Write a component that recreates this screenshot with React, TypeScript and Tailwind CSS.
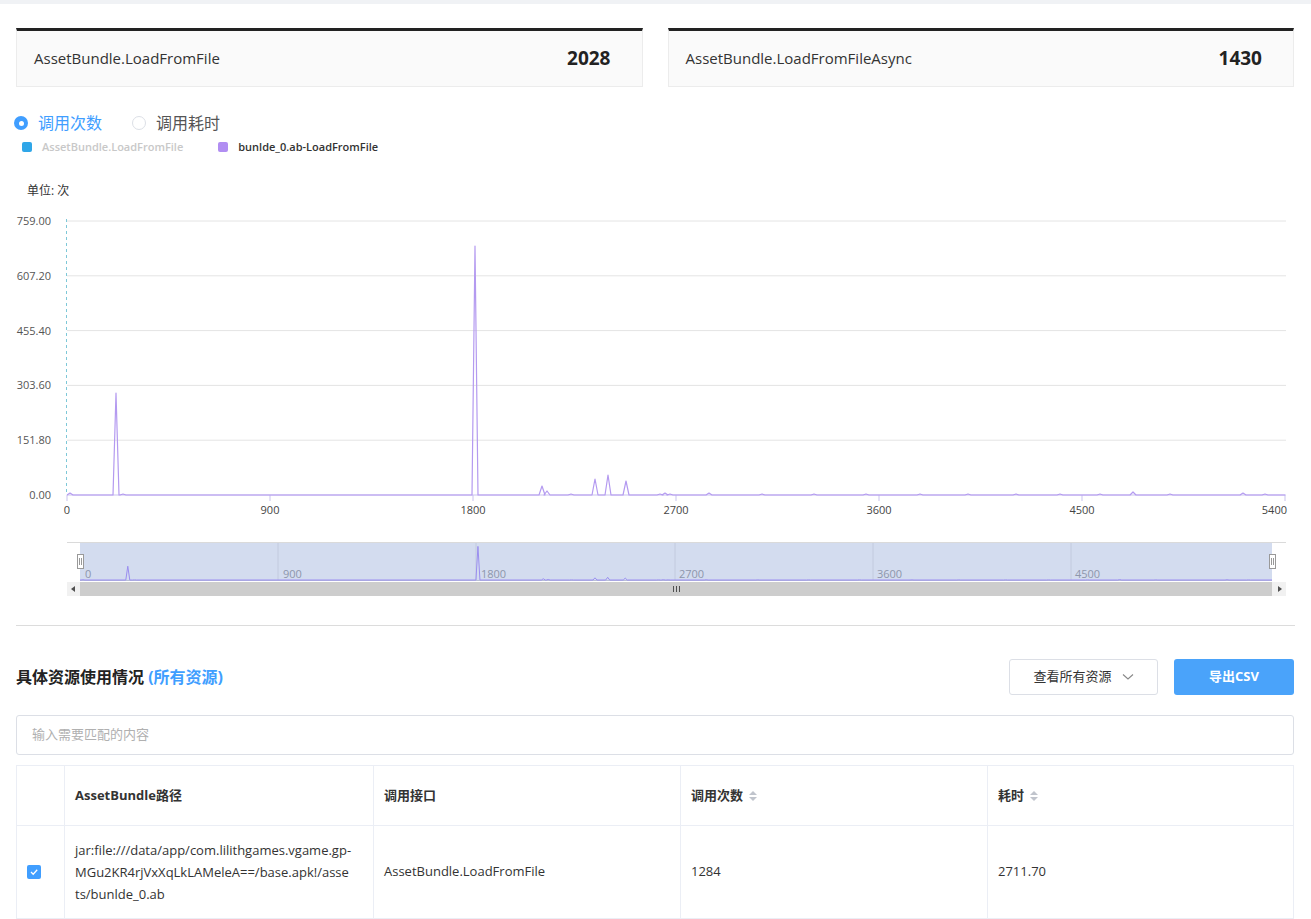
import React from 'react';

const font = { fontFamily: '"Open Sans", "Noto Sans CJK SC", sans-serif' };

// chart geometry in page pixels
const X0 = 67;
const X1 = 1285;
const Y0 = 494;
const yTicks = ['759.00', '607.20', '455.40', '303.60', '151.80', '0.00'];
const xTicks = ['0', '900', '1800', '2700', '3600', '4500', '5400'];

const spikes: [number, number][] = [
  [116, 392], [475, 245], [542, 485], [547, 490], [595, 478], [608, 474], [626, 480],
  [70, 492], [123, 493], [571, 493], [660, 493], [665, 492], [670, 493], [709, 492],
  [762, 493], [814, 493], [866, 493], [920, 493], [968, 493], [1016, 493], [1060, 493],
  [1100, 493], [1133, 491], [1170, 493], [1243, 492], [1265, 493],
];

function buildPath(pts: [number, number][], base: number, w: number) {
  const sorted = [...pts].sort((a, b) => a[0] - b[0]);
  let d = `M${X0},${base}`;
  for (const [x, y] of sorted) {
    d += ` L${x - w},${base} L${x},${y} L${x + w},${base}`;
  }
  d += ` L${X1},${base}`;
  return d;
}

const StatCard = ({ label, value }: { label: string; value: string }) => (
  <div className="flex-1 h-[59px] bg-[#fafafa] border border-[#ececec] border-t-[3px] border-t-[#222] flex items-center justify-between pl-[17px] pr-[31px]">
    <span className="text-[15px] text-[#333]">{label}</span>
    <span className="text-[19px] font-bold text-[#222]">{value}</span>
  </div>
);

const SortIcon = () => (
  <svg width="10" height="14" viewBox="0 0 10 14" className="ml-[5px]">
    <path d="M1 6 L5 2 L9 6 Z" fill="#c0c4cc" />
    <path d="M1 8 L5 12 L9 8 Z" fill="#c0c4cc" />
  </svg>
);

export default function App() {
  const mainPath = buildPath(spikes, Y0, 3);
  // overview mapping
  const ox = (x: number) => 80 + ((x - X0) / (X1 - X0)) * (1268 - 80);
  const oy = (y: number) => 579 - ((Y0 - y) / (Y0 - 220)) * 37;
  const overview = spikes.map(([x, y]) => [ox(x), oy(y)] as [number, number]);
  let od = `M80,579`;
  for (const [x, y] of overview.sort((a, b) => a[0] - b[0])) {
    od += ` L${x - 2},579 L${x},${y} L${x + 2},579`;
  }
  od += ` L1272,579`;

  return (
    <div className="w-[1311px] min-h-[919px] bg-white text-[#333]" style={font}>
      <div className="h-[4px] bg-[#f0f2f5]" />

      <div className="flex gap-[25px] px-[16px] pt-[24px] pr-[17px]">
        <StatCard label="AssetBundle.LoadFromFile" value="2028" />
        <StatCard label="AssetBundle.LoadFromFileAsync" value="1430" />
      </div>

      {/* radio group */}
      <div className="flex items-center h-[24px] mt-[24px] pl-[14px]">
        <span className="w-[14px] h-[14px] rounded-full bg-[#409eff] flex items-center justify-center">
          <span className="w-[5px] h-[5px] rounded-full bg-white" />
        </span>
        <span className="ml-[10px] text-[16px] text-[#409eff]">调用次数</span>
        <span className="ml-[30px] w-[14px] h-[14px] rounded-full border border-[#dcdfe6] bg-white" />
        <span className="ml-[10px] text-[16px] text-[#555]">调用耗时</span>
      </div>

      {/* legend */}
      <div className="flex items-center h-[20px] mt-[2px] pl-[22px] text-[11px] font-semibold">
        <span className="w-[10px] h-[10px] rounded-[2px] bg-[#2fa6e8]" />
        <span className="ml-[10px] text-[#c8c8c8]">AssetBundle.LoadFromFile</span>
        <span className="ml-[35px] w-[10px] h-[10px] rounded-[2px] bg-[#b18ef2]" />
        <span className="ml-[10px] text-[#333]">bunlde_0.ab-LoadFromFile</span>
      </div>

      <div className="pl-[27px] mt-[25px] h-[18px] text-[12px] text-[#333] leading-[18px]">单位: 次</div>

      {/* chart */}
      <svg width="1311" height="400" viewBox="0 205 1311 400" className="block mt-[6px]" style={font}>
        {yTicks.map((t, i) => {
          const y = 220 + i * 54.8;
          return (
            <g key={t}>
              <line x1={X0} x2={1286} y1={y} y2={y} stroke={i === 5 ? '#c9c3ee' : '#e4e4e4'} strokeWidth="1" />
              <text x="51" y={y + 4} textAnchor="end" fontSize="11" fill="#555">
                {t}
              </text>
            </g>
          );
        })}
        <line x1={X0 - 0.5} x2={X0 - 0.5} y1="218" y2="494" stroke="#7ec8d8" strokeDasharray="3 3" />
        {xTicks.map((t, i) => {
          const x = X0 + i * 203;
          return (
            <g key={t}>
              <line x1={x} x2={x} y1="494" y2="500" stroke="#c9c3ee" />
              <text x={i === 6 ? x + 2 : x} y="513" textAnchor={i === 6 ? 'end' : 'middle'} fontSize="11" fill="#444">
                {t}
              </text>
            </g>
          );
        })}
        <path d={mainPath} fill="none" stroke="#b49af0" strokeWidth="1.2" strokeLinejoin="round" />

        {/* data zoom */}
        <line x1="67" x2="1286" y1="541.5" y2="541.5" stroke="#dadada" />
        <rect x="80" y="542" width="1192" height="38" fill="#d3dcef" />
        {[278, 476, 675, 873, 1071].map((x) => (
          <line key={x} x1={x} x2={x} y1="542" y2="580" stroke="#c2cade" />
        ))}
        {['0', '900', '1800', '2700', '3600', '4500'].map((t, i) => (
          <text key={t} x={85 + i * 198} y="577" fontSize="11" fill="#8d96ab">
            {t}
          </text>
        ))}
        <line x1="80" x2="1272" y1="579.5" y2="579.5" stroke="#b8bfd6" />
        <path d={od} fill="none" stroke="#9a8ef0" strokeWidth="1" />
        <rect x="77.5" y="553.5" width="6" height="14" fill="#fff" stroke="#999" />
        <line x1="79.5" x2="79.5" y1="557" y2="564" stroke="#999" />
        <line x1="81.5" x2="81.5" y1="557" y2="564" stroke="#999" />
        <rect x="1269.5" y="553.5" width="6" height="14" fill="#fff" stroke="#999" />
        <line x1="1271.5" x2="1271.5" y1="557" y2="564" stroke="#999" />
        <line x1="1273.5" x2="1273.5" y1="557" y2="564" stroke="#999" />

        {/* scrollbar */}
        <rect x="67" y="581" width="1219" height="14" fill="#f1f1f1" />
        <rect x="80" y="581" width="1192" height="14" fill="#cdcdcd" />
        <path d="M71 588 L75 585 L75 591 Z" fill="#505050" />
        <path d="M1282 588 L1278 585 L1278 591 Z" fill="#505050" />
        <line x1="673.5" x2="673.5" y1="585" y2="591" stroke="#505050" />
        <line x1="676.5" x2="676.5" y1="585" y2="591" stroke="#505050" />
        <line x1="679.5" x2="679.5" y1="585" y2="591" stroke="#505050" />
      </svg>

      <div className="mx-[16px] mt-[19px] border-t border-[#dcdcdc]" />

      {/* section header */}
      <div className="flex items-center justify-between px-[16px] pr-[17px] mt-[33px] h-[36px]">
        <div className="text-[16px] font-bold text-[#222]">
          具体资源使用情况 <span className="text-[#409eff]">(所有资源)</span>
        </div>
        <div className="flex items-center gap-[16px]">
          <div className="w-[149px] h-[36px] border border-[#dcdfe6] rounded-[3px] flex items-center justify-center text-[13px] text-[#333]">
            查看所有资源
            <svg width="12" height="8" viewBox="0 0 12 8" className="ml-[10px]">
              <path d="M1 1.5 L6 6 L11 1.5" fill="none" stroke="#888" strokeWidth="1.1" />
            </svg>
          </div>
          <div className="w-[120px] h-[36px] rounded-[3px] bg-[#4aa3fa] flex items-center justify-center text-[13px] font-bold text-white">
            导出CSV
          </div>
        </div>
      </div>

      {/* search */}
      <div className="mx-[16px] mr-[17px] mt-[20px] h-[40px] border border-[#dcdfe6] rounded-[3px] flex items-center pl-[15px] text-[13px] text-[#b0b0b0]">
        输入需要匹配的内容
      </div>

      {/* table */}
      <div className="mx-[16px] mr-[17px] mt-[10px] border border-[#ebeef5]">
        <div className="grid grid-cols-[48px_309px_307px_307px_1fr] h-[59px] text-[13px] font-bold text-[#333]">
          <div className="border-r border-[#ebeef5]" />
          <div className="border-r border-[#ebeef5] flex items-center pl-[10px]">AssetBundle路径</div>
          <div className="border-r border-[#ebeef5] flex items-center pl-[10px]">调用接口</div>
          <div className="border-r border-[#ebeef5] flex items-center pl-[10px]">
            调用次数
            <SortIcon />
          </div>
          <div className="flex items-center pl-[10px]">
            耗时
            <SortIcon />
          </div>
        </div>
        <div className="grid grid-cols-[48px_309px_307px_307px_1fr] h-[93px] border-t border-[#ebeef5] text-[13px] text-[#333]">
          <div className="border-r border-[#ebeef5] flex items-center pl-[10px]">
            <span className="w-[14px] h-[14px] rounded-[2px] bg-[#409eff] flex items-center justify-center">
              <svg width="10" height="10" viewBox="0 0 10 10">
                <path d="M2 5 L4.2 7.2 L8.2 2.8" fill="none" stroke="#fff" strokeWidth="1.3" />
              </svg>
            </span>
          </div>
          <div className="border-r border-[#ebeef5] flex items-center pl-[10px] pr-[8px] leading-[22px]">
            <span>
              jar:file:///data/app/com.lilithgames.vgame.gp-
              <br />
              MGu2KR4rjVxXqLkLAMeleA==/base.apk!/asse
              <br />
              ts/bunlde_0.ab
            </span>
          </div>
          <div className="border-r border-[#ebeef5] flex items-center pl-[10px]">AssetBundle.LoadFromFile</div>
          <div className="border-r border-[#ebeef5] flex items-center pl-[10px]">1284</div>
          <div className="flex items-center pl-[10px]">2711.70</div>
        </div>
      </div>
    </div>
  );
}
